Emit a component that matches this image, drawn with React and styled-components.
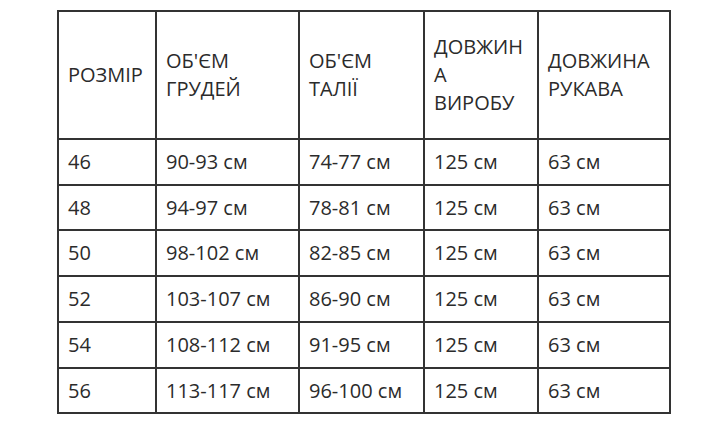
import React from "react";
import styled, { createGlobalStyle } from "styled-components";

const GlobalStyle = createGlobalStyle`
  html, body {
    margin: 0;
    padding: 0;
    background: #fff;
  }
`;

const Page = styled.div`
  padding: 10px 0 0 57px;
`;

const Table = styled.table`
  border-collapse: collapse;
  table-layout: fixed;
  width: 612px;
  font-family: "Open Sans", "Noto Sans", sans-serif;
  font-size: 20px;
  line-height: 28px;
  color: #2b2b2b;
`;

const HeadCell = styled.th`
  border: 2px solid #333;
  padding: 21px 9px;
  text-align: left;
  font-weight: 400;
  vertical-align: middle;
  overflow-wrap: anywhere;
`;

const Cell = styled.td`
  border: 2px solid #333;
  padding: 8px 9px;
  line-height: 27.7px;
  white-space: nowrap;
`;

const columns = [
  { title: "РОЗМІР", width: 98 },
  { title: "ОБ'ЄМ ГРУДЕЙ", width: 143 },
  { title: "ОБ'ЄМ ТАЛІЇ", width: 125 },
  { title: "ДОВЖИНА ВИРОБУ", width: 114 },
  { title: "ДОВЖИНА РУКАВА", width: 132 },
];

const rows = [
  ["46", "90-93 см", "74-77 см", "125 см", "63 см"],
  ["48", "94-97 см", "78-81 см", "125 см", "63 см"],
  ["50", "98-102 см", "82-85 см", "125 см", "63 см"],
  ["52", "103-107 см", "86-90 см", "125 см", "63 см"],
  ["54", "108-112 см", "91-95 см", "125 см", "63 см"],
  ["56", "113-117 см", "96-100 см", "125 см", "63 см"],
];

const App = () => {
  return (
    <>
      <GlobalStyle />
      <Page>
        <Table>
          <colgroup>
            {columns.map((c) => (
              <col key={c.title} style={{ width: c.width }} />
            ))}
          </colgroup>
          <thead>
            <tr>
              {columns.map((c) => (
                <HeadCell key={c.title}>{c.title}</HeadCell>
              ))}
            </tr>
          </thead>
          <tbody>
            {rows.map((r) => (
              <tr key={r[0]}>
                {r.map((v, i) => (
                  <Cell key={i}>{v}</Cell>
                ))}
              </tr>
            ))}
          </tbody>
        </Table>
      </Page>
    </>
  );
};

export default App;
